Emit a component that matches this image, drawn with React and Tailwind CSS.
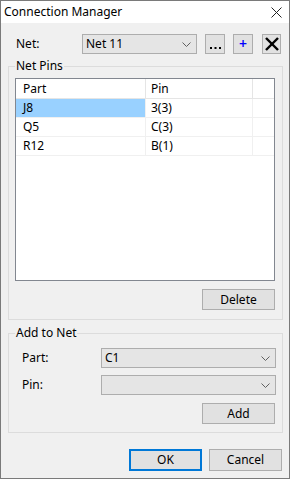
import React from "react";

const font = { fontFamily: '"Noto Sans", "Segoe UI", Arial, sans-serif' };

function Chevron() {
  return (
    <svg width="9" height="5" viewBox="0 0 9 5" className="block">
      <polyline points="0.5,0.5 4.5,4.5 8.5,0.5" fill="none" stroke="#606060" strokeWidth="1" />
    </svg>
  );
}

function Combo({ value, className }) {
  return (
    <div className={"flex items-center justify-between border border-[#adadad] bg-[#e5e5e5] pl-[3px] pr-[5px] text-[12px] text-black " + className}>
      <span className="leading-none">{value}</span>
      <Chevron />
    </div>
  );
}

function Btn({ children, className }) {
  return (
    <div className={"flex items-center justify-center border border-[#adadad] bg-[#e1e1e1] text-[12px] text-black " + className}>
      {children}
    </div>
  );
}

export default function App() {
  const rows = [
    ["J8", "3(3)", true],
    ["Q5", "C(3)", false],
    ["R12", "B(1)", false],
  ];
  return (
    <div style={font} className="w-[290px] h-[479px] border border-[#7a7a7a] bg-[#f0f0f0] flex flex-col text-black">
      {/* title bar */}
      <div className="h-[22px] bg-white flex items-center justify-between pl-[3px] pr-[7px]">
        <span className="text-[12px] leading-none">Connection Manager</span>
        <svg width="11" height="11" viewBox="0 0 11 11">
          <line x1="0.5" y1="0.5" x2="10.5" y2="10.5" stroke="#222" strokeWidth="1" />
          <line x1="10.5" y1="0.5" x2="0.5" y2="10.5" stroke="#222" strokeWidth="1" />
        </svg>
      </div>

      {/* net row */}
      <div className="mt-[11px] h-[20px] flex items-center">
        <span className="ml-[15px] w-[66px] text-[12px] leading-none">Net:</span>
        <Combo value="Net 11" className="w-[115px] h-[20px]" />
        <Btn className="ml-[8px] w-[20px] h-[20px]">
          <svg width="11" height="2" viewBox="0 0 11 2" className="mt-[8px]">
            <rect x="0" y="0" width="2" height="2" fill="#000" />
            <rect x="4.5" y="0" width="2" height="2" fill="#000" />
            <rect x="9" y="0" width="2" height="2" fill="#000" />
          </svg>
        </Btn>
        <Btn className="ml-[8px] w-[20px] h-[20px]">
          <span className="text-[#0000ff] text-[14px] leading-none font-semibold">+</span>
        </Btn>
        <Btn className="ml-[9px] w-[19px] h-[20px]">
          <svg width="14" height="14" viewBox="0 0 14 14">
            <line x1="1" y1="1" x2="13" y2="13" stroke="#000" strokeWidth="2.4" />
            <line x1="13" y1="1" x2="1" y2="13" stroke="#000" strokeWidth="2.4" />
          </svg>
        </Btn>
      </div>

      {/* Net Pins group */}
      <div className="relative mt-[12px] ml-[7px] w-[275px] h-[254px] border border-[#dcdcdc] flex flex-col">
        <span className="absolute left-[6px] top-[-9px] bg-[#f0f0f0] px-[1px] text-[12px] leading-[16px]">Net Pins</span>
        <div className="mt-[11px] ml-[6px] w-[260px] h-[203px] border border-[#828790] bg-white flex flex-col">
          <div className="flex h-[20px] border-b border-[#e5e5e5]">
            <div className="w-[130px] border-r border-[#e5e5e5] pl-[7px] text-[12px] flex items-center">Part</div>
            <div className="w-[107px] border-r border-[#e5e5e5] pl-[5px] text-[12px] flex items-center">Pin</div>
          </div>
          {rows.map(([p, n, sel]) => (
            <div key={p} className="flex h-[19px] border-b border-[#f0f0f0]">
              <div className={"w-[130px] border-r border-[#f0f0f0] pl-[7px] text-[12px] flex items-center " + (sel ? "bg-[#99d1ff]" : "")}>{p}</div>
              <div className="w-[107px] border-r border-[#f0f0f0] pl-[5px] text-[12px] flex items-center">{n}</div>
            </div>
          ))}
        </div>
        <div className="flex justify-end pr-[7px] mt-[8px]">
          <Btn className="w-[73px] h-[21px]">Delete</Btn>
        </div>
      </div>

      {/* Add to Net group */}
      <div className="relative mt-[13px] ml-[7px] w-[275px] h-[100px] border border-[#dcdcdc] flex flex-col">
        <span className="absolute left-[6px] top-[-9px] bg-[#f0f0f0] px-[1px] text-[12px] leading-[16px]">Add to Net</span>
        <div className="mt-[14px] flex items-center h-[20px]">
          <span className="ml-[13px] w-[79px] text-[12px] leading-none">Part:</span>
          <Combo value="C1" className="w-[175px] h-[20px]" />
        </div>
        <div className="mt-[7px] flex items-center h-[20px]">
          <span className="ml-[13px] w-[79px] text-[12px] leading-none">Pin:</span>
          <Combo value="" className="w-[175px] h-[20px]" />
        </div>
        <div className="flex justify-end pr-[7px] mt-[8px]">
          <Btn className="w-[73px] h-[21px]">Add</Btn>
        </div>
      </div>

      {/* bottom buttons */}
      <div className="mt-[16px] flex justify-end pr-[7px] gap-[7px]">
        <div className="w-[73px] h-[22px] border border-[#0078d7] bg-[#e1e1e1] flex items-center justify-center text-[12px] shadow-[inset_0_0_0_1px_#0078d7]">OK</div>
        <Btn className="w-[73px] h-[22px]">Cancel</Btn>
      </div>
    </div>
  );
}
